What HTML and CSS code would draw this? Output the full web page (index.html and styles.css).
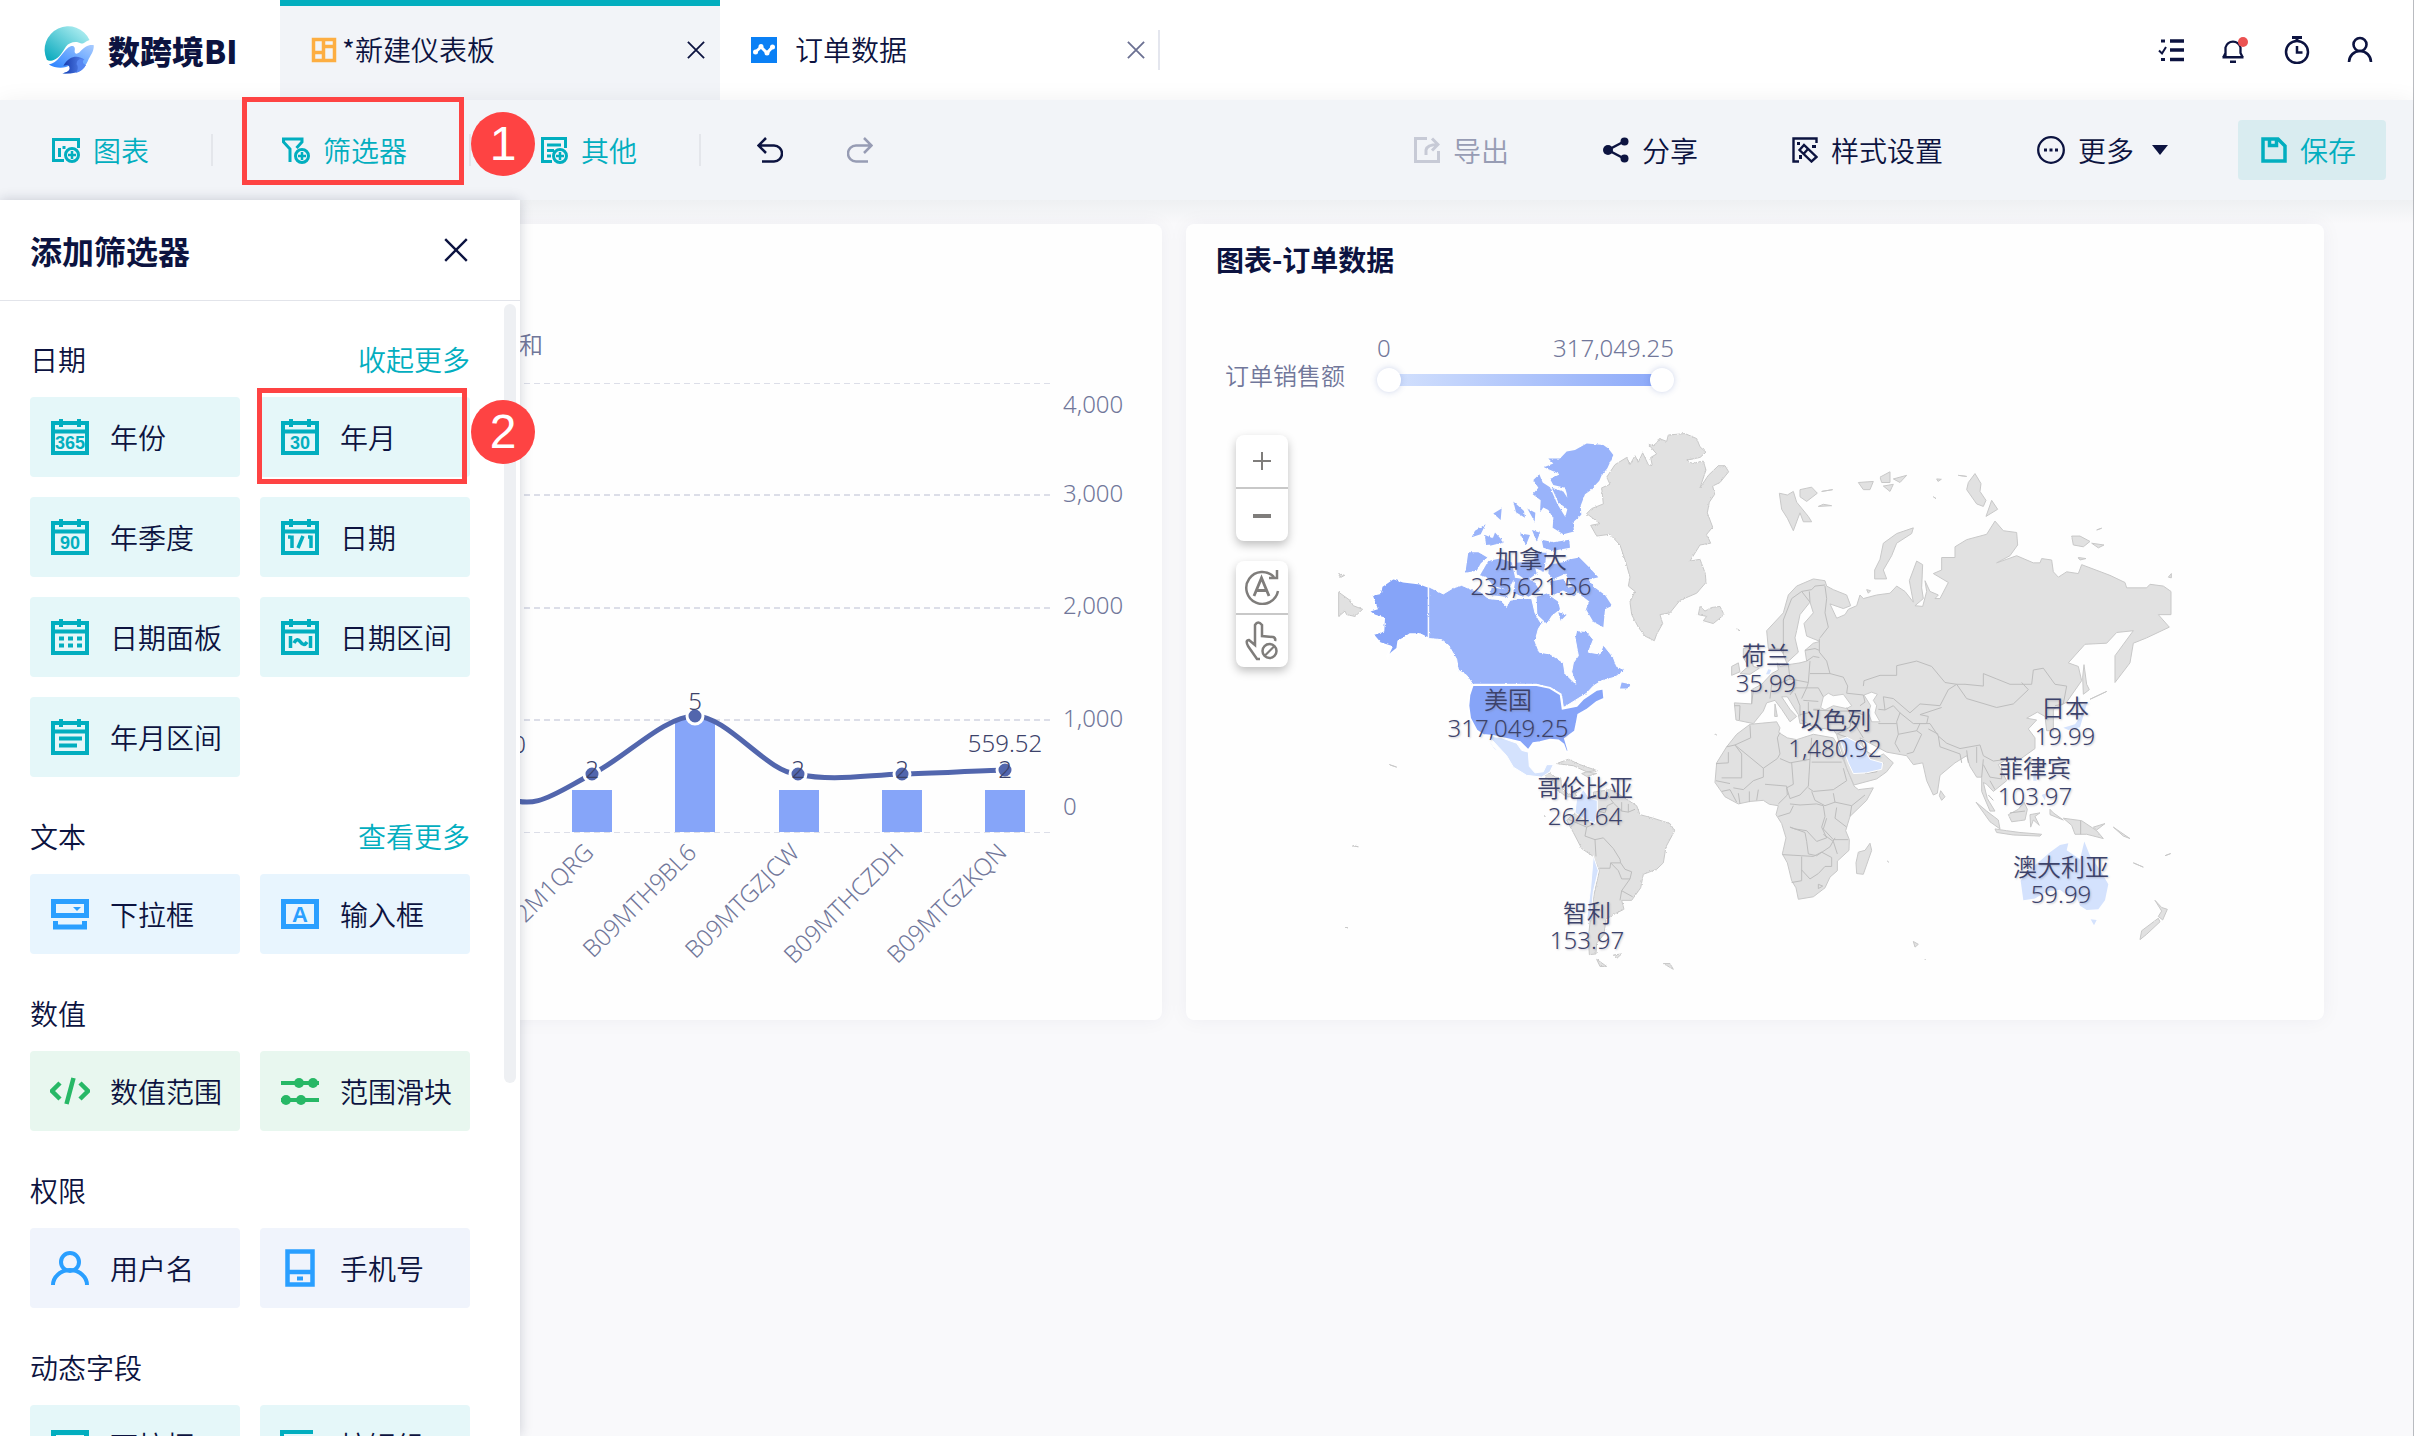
FILE: index.html
```html
<!DOCTYPE html>
<html lang="zh-CN">
<head>
<meta charset="utf-8">
<meta name="viewport" content="width=device-width, initial-scale=1">
<title>数跨境BI</title>
<link rel="stylesheet" href="styles.css">
</head>
<body>
<svg class="defs" aria-hidden="true">
  <symbol id="cal" viewBox="0 0 38 36">
    <path d="M2 4H36V34H2ZM0 12.500H38" fill="none" stroke="currentColor" stroke-width="4"/>
    <path d="M8 0h4v8H8zM26 0h4v8h-4z" fill="currentColor"/>
  </symbol>
  <symbol id="close" viewBox="0 0 20 20">
    <path d="M1 1L19 19M19 1L1 19" fill="none" stroke="currentColor" stroke-width="2"/>
  </symbol>
  <symbol id="plus-dot" viewBox="0 0 16 16">
    <circle cx="8" cy="8" r="6.500" fill="none" stroke="currentColor" stroke-width="3"/>
    <path d="M8 4v8M4 8h8" stroke="currentColor" stroke-width="2.500"/>
  </symbol>
  <symbol id="user" viewBox="0 0 38 34">
    <circle cx="19" cy="11" r="9" fill="none" stroke="currentColor" stroke-width="4"/>
    <path d="M2 34A17 15 0 0 1 36 34" fill="none" stroke="currentColor" stroke-width="4"/>
  </symbol>
</svg>

<div class="app">
  <header class="header">
    <a class="brand" href="#">
      <svg class="brand-mark" viewBox="0 0 150 145" aria-hidden="true">
        <defs>
          <linearGradient id="g1" x1="0" y1="1" x2="1" y2="0"><stop offset="0" stop-color="#00a6bb"/><stop offset="1" stop-color="#c3f6f7"/></linearGradient>
          <linearGradient id="g2" x1="0" y1="1" x2="1" y2="0"><stop offset="0" stop-color="#1878ff"/><stop offset="1" stop-color="#a9ccff"/></linearGradient>
          <linearGradient id="g3" x1="0" y1="0" x2="1" y2="0"><stop offset="0" stop-color="#1236a8"/><stop offset="1" stop-color="#5c8df5"/></linearGradient>
        </defs>
        <path d="M8 102A70 70 0 1 1 137 42C126 45 120 54 112 53C98 44 76 48 66 62C54 80 46 98 25 104Q14 107 8 102Z" fill="url(#g1)"/>
        <path d="M14 116C42 112 52 82 72 66C84 56 96 60 92 76C92 84 98 86 106 80C124 62 132 56 150 58C150 80 140 86 132 106C122 128 104 145 56 143C70 140 84 132 80 118C64 128 36 130 14 116Z" fill="url(#g2)"/>
        <path d="M58 120C78 84 108 90 122 102C112 104 116 116 126 118C112 140 90 146 54 143C76 140 82 128 72 118Z" fill="url(#g3)"/>
        <path d="M98 116C98 104 106 96 120 102C114 104 114 116 126 118C120 130 110 138 96 142C102 132 104 122 98 116Z" fill="#5687f2"/>
      </svg>
      <span>数跨境BI</span>
    </a>
    <nav class="tabs">
      <div class="tab tab-active">
        <svg class="i26" viewBox="0 0 26 26" aria-hidden="true"><path d="M2.500 2.500h21v21h-21zM12.500 2v22M2 15.500h11M12 9.500h12" fill="none" stroke="#fdae42" stroke-width="3.500"/></svg>
        <a class="tab-name" href="#">*新建仪表板</a>
        <button class="tab-close" aria-label="关闭"><svg class="i18"><use href="#close"/></svg></button>
      </div>
      <div class="tab tab-idle">
        <svg class="i26" viewBox="0 0 26 26" aria-hidden="true"><path d="M0 0h26v26H0z" fill="#0a80f5"/><path d="M4.500 15L10 10L16 16L21.500 10" fill="none" stroke="#fff" stroke-width="3" stroke-linejoin="round"/><g fill="#fff"><circle cx="4.500" cy="15" r="2.500"/><circle cx="10" cy="9.500" r="2.500"/><circle cx="16" cy="16" r="2.500"/><circle cx="21.500" cy="10" r="2.500"/></g></svg>
        <a class="tab-name" href="#">订单数据</a>
        <button class="tab-close" aria-label="关闭"><svg class="i18"><use href="#close"/></svg></button>
      </div>
    </nav>
    <div class="header-tools">
      <button aria-label="任务"><svg class="i28" viewBox="0 0 28 28"><path d="M13 5h14M13 14h14M13 23.500h14" stroke="currentColor" stroke-width="3.500"/><path d="M4 3.500h4v3H4zM4 22h4v3H4z" fill="currentColor"/><path d="M2 14.500l3 3L9 11" fill="none" stroke="currentColor" stroke-width="2"/></svg></button>
      <button aria-label="通知"><svg class="i28" viewBox="0 0 28 28"><path d="M5.500 21V11.500A8 9 0 0 1 20.500 11.500V17L22.500 21M3.500 21L5.500 17" fill="none" stroke="currentColor" stroke-width="2.300"/><path d="M2.500 20h21v2.500h-21zM10 24.500h6V27h-6z" fill="currentColor"/><circle cx="23" cy="6" r="5" fill="#eb5252"/></svg></button>
      <button aria-label="计时"><svg class="i28" viewBox="0 0 28 28"><circle cx="14" cy="16" r="11" fill="none" stroke="currentColor" stroke-width="2.500"/><path d="M9 0h10v3H9zM12.500 2h3v4h-3z" fill="currentColor"/><path d="M14 10v6.500h5.500" fill="none" stroke="currentColor" stroke-width="2.500"/></svg></button>
      <button aria-label="用户"><svg class="i28" viewBox="0 0 28 28"><circle cx="14" cy="8.500" r="6.500" fill="none" stroke="currentColor" stroke-width="2.600"/><path d="M3 26A11 11 0 0 1 25 26" fill="none" stroke="currentColor" stroke-width="2.600"/></svg></button>
    </div>
  </header>

  <div class="toolbar">
    <div class="add-group">
      <button class="add">
        <svg class="i28" viewBox="0 0 28 28" aria-hidden="true"><path d="M12 24.500H1.500V3.500H26.500V12M7.500 12v9M12 10v3" fill="none" stroke="currentColor" stroke-width="3"/><use href="#plus-dot" x="12" y="11" width="16" height="16"/></svg>图表
      </button>
      <button class="add">
        <svg class="i28" viewBox="0 0 28 28" aria-hidden="true"><path d="M8 26V13L1.500 6V3H20V6L14.500 12" fill="none" stroke="currentColor" stroke-width="3"/><use href="#plus-dot" x="12" y="12" width="16" height="16"/></svg>筛选器
        <span class="mark mark-tool"></span><span class="step step-tool">1</span>
      </button>
      <button class="add">
        <svg class="i28" viewBox="0 0 28 28" aria-hidden="true"><path d="M12 25.500H2.500V2.500H25.500V12M7 9h14M7 14.500h7M7 20h4" fill="none" stroke="currentColor" stroke-width="3"/><use href="#plus-dot" x="12" y="12" width="16" height="16"/></svg>其他
      </button>
    </div>
    <div class="history">
      <button aria-label="撤销"><svg class="i26" viewBox="0 0 26 26"><path d="M9 1L1.500 8.500L9 16M2 8.500H17A8 8 0 0 1 17 24.500H5" fill="none" stroke="currentColor" stroke-width="2.500"/></svg></button>
      <button class="off" aria-label="重做" disabled><svg class="i26" viewBox="0 0 26 26"><path d="M17 1L24.500 8.500L17 16M24 8.500H9A8 8 0 0 0 9 24.500H21" fill="none" stroke="currentColor" stroke-width="2.500"/></svg></button>
    </div>
    <div class="actions">
      <button class="off" disabled><svg class="i26 pale" viewBox="0 0 26 26" aria-hidden="true"><path d="M13 1.500H1.500V24.500H24.500V14M12 18V13Q13 7.500 24 7.500M18 1.500L24 7.500L18 13.500" fill="none" stroke="currentColor" stroke-width="3"/></svg>导出</button>
      <button><svg class="i26" viewBox="0 0 26 26" aria-hidden="true"><path d="M21 4.500L5 13L21 21.500" fill="none" stroke="currentColor" stroke-width="2.500"/><g fill="currentColor"><circle cx="21.500" cy="4.500" r="4"/><circle cx="5" cy="13" r="5"/><circle cx="21.500" cy="21.500" r="4"/></g></svg>分享</button>
      <button><svg class="i26" viewBox="0 0 26 26" aria-hidden="true"><path d="M7 24.500H1.500V1.500H24.500V6M7.500 13L12 8L24.500 20L19.500 24.500ZM11.500 17L16 12" fill="none" stroke="currentColor" stroke-width="2.400"/><path d="M5 5h3v3H5zM20 8h4v3h-4zM7 18h3v4H7z" fill="currentColor"/></svg>样式设置</button>
      <button class="more"><svg class="i28" viewBox="0 0 28 28" aria-hidden="true"><circle cx="14" cy="14" r="12.800" fill="none" stroke="currentColor" stroke-width="2.300"/><path d="M7 12.500h3v3H7zM12.500 12.500h3v3h-3zM18 12.500h3v3h-3z" fill="currentColor"/></svg>更多<span class="caret"></span></button>
      <button class="save"><svg class="i26" viewBox="0 0 26 26" aria-hidden="true"><path d="M2 2H17L24 9V24H2ZM8.500 2V8.500H15.500V2" fill="none" stroke="currentColor" stroke-width="3.500"/></svg>保存</button>
    </div>
  </div>

  <main class="workspace">
    <div class="board">
      <section class="card" aria-label="订单量图表">
        <svg class="combo" viewBox="0 0 1138 796" role="img" aria-label="柱线图">
          <g class="grid"><path class="thin" d="M480 159.500H1029"/><path d="M480 271H1029M480 384H1029M480 496H1029"/><path class="thin" d="M480 608.500H1029"/></g>
          <g class="axis">
            <text x="495" y="130">和</text>
            <text x="1039" y="189">4,000</text><text x="1039" y="278">3,000</text><text x="1039" y="390">2,000</text><text x="1039" y="503">1,000</text><text x="1039" y="591">0</text>
          </g>
          <g fill="#86a5f9"><path d="M548 566h40v42h-40zM651 496h40v112h-40zM755 566h40v42h-40zM858 566h40v42h-40zM961 566h40v42h-40z"/></g>
          <path d="M480 572C510 588 530 570 568 550C600 535 640 492 671 492C704 492 744 550 774 550C808 558 843 551 878 550C913 549 948 547 981 546" fill="none" stroke="#5266ad" stroke-width="5"/>
          <g class="dots"><circle cx="568" cy="550" r="8"/><circle cx="671" cy="492" r="8"/><circle cx="774" cy="550" r="8"/><circle cx="878" cy="550" r="8"/><circle cx="981" cy="546" r="8"/></g>
          <g class="value">
            <text x="495" y="529">0</text><text x="568" y="554">2</text><text x="671" y="486">5</text><text x="774" y="554">2</text><text x="878" y="554">2</text><text x="981" y="554">2</text><text x="981" y="528">559.52</text>
          </g>
          <g class="axis end">
            <text transform="translate(571 630) rotate(-45)">2M1QRG</text>
            <text transform="translate(674 630) rotate(-45)">B09MTH9BL6</text>
            <text transform="translate(777 630) rotate(-45)">B09MTGZJCW</text>
            <text transform="translate(881 630) rotate(-45)">B09MTHCZDH</text>
            <text transform="translate(984 630) rotate(-45)">B09MTGZKQN</text>
          </g>
        </svg>
      </section>

      <section class="card map-card">
        <h2>图表-订单数据</h2>
        <div class="legend">
          <span class="legend-name">订单销售额</span>
          <div class="legend-scale">
            <div class="legend-ends"><span>0</span><span>317,049.25</span></div>
            <div class="range">
              <input type="range" aria-label="最小值" min="0" max="317049" value="0">
              <input type="range" aria-label="最大值" min="0" max="317049" value="317049">
            </div>
          </div>
        </div>
        <div class="map-body">
          <div class="map-tools">
            <div class="tool-pair">
              <button aria-label="放大"><svg class="i18" viewBox="0 0 18 18"><path d="M9 0v18M0 9h18" stroke="currentColor" stroke-width="2"/></svg></button>
              <button aria-label="缩小"><svg class="i18" viewBox="0 0 18 18"><path d="M0 10h18" stroke="currentColor" stroke-width="4"/></svg></button>
            </div>
            <div class="tool-pair">
              <button aria-label="重置"><svg class="i36" viewBox="0 0 36 36"><path d="M30 8A16 16 0 1 0 34 22M33 1V9H25" fill="none" stroke="currentColor" stroke-width="2.500"/><path d="M10 27L17.500 9L25 27M12.500 21.500H22.500" fill="none" stroke="currentColor" stroke-width="2.800"/></svg></button>
              <button aria-label="禁止拖动"><svg class="i40" viewBox="0 0 36 40"><path d="M16 38H13L4 25Q1 19 5 19L11 24V4Q14 -1 18 4V15L29 16Q32 17 31 20" fill="none" stroke="currentColor" stroke-width="2.500"/><circle cx="25.500" cy="30" r="7" fill="none" stroke="currentColor" stroke-width="2.500"/><path d="M20.500 35L30.500 25" stroke="currentColor" stroke-width="2"/></svg></button>
            </div>
          </div>
          <svg class="map" viewBox="0 0 880 560" role="img" aria-label="世界地图">
            <defs>
              <filter id="coast" x="-2%" y="-2%" width="104%" height="104%"><feTurbulence type="fractalNoise" baseFrequency="0.14" numOctaves="2" seed="4" result="n"/><feDisplacementMap in="SourceGraphic" in2="n" scale="7" xChannelSelector="R" yChannelSelector="G"/></filter>
              <filter id="coast-soft" x="-2%" y="-2%" width="104%" height="104%"><feTurbulence type="fractalNoise" baseFrequency="0.12" numOctaves="2" seed="9" result="n"/><feDisplacementMap in="SourceGraphic" in2="n" scale="4" xChannelSelector="R" yChannelSelector="G"/></filter>
            </defs>
            <!-- Americas -->
            <g transform="scale(.33333 .35714)">
              <g class="land" filter="url(#coast)">
                <path d="M985 68L1000 72 1012 62 1018 52 1040 60 1045 42 1095 38 1130 52 1140 75 1158 90 1140 105 1100 112 1118 122 1150 115 1158 140 1140 190 1165 155 1195 128 1215 128 1226 145 1200 175 1178 185 1184 208 1168 230 1162 260 1178 300 1160 320 1172 345 1140 350 1110 395 1140 390 1156 430 1158 455 1130 485 1080 505 1050 540 1020 545 1028 570 1010 600 1003 618 975 605 955 580 935 545 930 510 945 480 925 465 930 440 918 400 900 350 870 320 830 325 812 295 840 290 800 262 815 248 850 235 845 190 870 180 860 160 885 125 920 105 930 125 945 100 955 118 968 92 985 125 997 128 992 105 1010 95Z"/>
                <path d="M1140 522L1155 535 1175 525 1200 522 1212 545 1180 570 1150 562 1160 550 1135 545Z"/>
                <path d="M56 482L90 505 100 520 128 530 105 550 80 545 75 535 56 550ZM56 430L74 435 60 442Z"/>
                <path d="M672 992L692 988 705 1000 722 1002 725 1030 745 1048 770 1042 765 1055 740 1055 710 1035 700 1010 680 1005Z"/>
                <path d="M710 962L745 950 780 965 832 982 800 985 760 968ZM785 990L800 985 830 990 800 998Z"/>
                <path d="M820 1042L870 1035 900 1050 950 1080 960 1105 1000 1115 1050 1130 1064 1150 1038 1195 1030 1240 1010 1258 970 1272 962 1310 935 1345 905 1345 912 1370 880 1385 858 1398 852 1440 830 1465 828 1495 808 1497 805 1450 812 1390 822 1330 838 1262 820 1222 785 1200 760 1155 740 1120 765 1100 825 1130Z"/>
                <path d="M830 1510L860 1530 840 1530ZM880 1498L905 1495 890 1508ZM1030 1522L1050 1522 1060 1538ZM98 1192L115 1195ZM75 1420L84 1422ZM208 965L230 972ZM672 1108L676 1110ZM1250 585L1260 590ZM1187 880L1190 882Z"/>
              </g>
              <path class="border" d="M832 1095L855 1100 862 1080 880 1072 862 1050M880 1072L905 1095 925 1098 945 1090M905 1070L905 1095M925 1075L925 1098M825 1130L800 1140 795 1165 825 1175 828 1222M825 1175L850 1170 880 1200 900 1230 902 1240 872 1240 870 1255 838 1255M872 1240L895 1262 905 1285 930 1285 935 1265 915 1258 902 1240M930 1285L905 1318 900 1345M905 1318L938 1335M745 1118L775 1130 800 1140"/>
              <g class="us" filter="url(#coast)">
                <path d="M220 443L250 452 300 458 326 467 326 612 300 600 270 600 250 612 235 620 232 640 200 664 215 635 180 625 158 600 190 590 192 555 165 548 145 535 170 528 155 490 180 485 185 465Z"/>
              </g>
              <g class="ca" filter="url(#coast)">
                <path d="M326 467L370 487 400 470 425 463 455 475 480 480 505 500 540 503 560 522 570 505 600 500 635 500 645 540 660 565 672 560 655 585 645 620 658 650 690 655 730 680 735 710 768 740 755 705 760 680 775 660 765 610 770 590 800 592 820 615 805 650 840 655 850 630 880 665 890 690 915 700 885 720 845 730 820 745 800 765 740 800 730 805 725 775 700 755 650 740 458 740 440 715 415 700 410 670 385 630 365 615 326 612Z"/>
              </g>
              <g class="ca isles" filter="url(#coast)">
                <path d="M880 98L862 135 845 155 838 170 810 198 795 208 782 240 784 265 755 290 732 285 742 250 715 230 695 190 730 200 742 218 740 205 735 190 700 182 690 165 720 152 672 132 700 122 685 108 720 108 740 88 765 84 800 66 850 70 865 80Z"/>
                <path d="M658 152L668 175 690 188 712 235 735 270 760 290 762 312 730 320 698 302 700 275 685 252 670 245 660 258 662 225 638 208 655 190 640 168Z"/>
                <path d="M445 370L475 370 502 385 482 402 470 422 436 428ZM505 395L540 388 575 398 585 440 565 475 520 465 500 440 480 435ZM515 470L570 475 560 495 510 490ZM585 455L625 465 610 495 580 485ZM665 335L700 342 748 335 750 358 700 366 670 358ZM525 315L552 342 510 352ZM465 310L497 292 482 320 455 328ZM520 262L545 248 542 280ZM580 228L612 255 615 274 588 258ZM622 248L646 260 644 285ZM600 318L630 322 618 350ZM495 322L520 332 548 345 498 350ZM636 308L660 316 650 340ZM590 400L640 395 650 430 620 450 590 430ZM645 372L680 372 672 425 640 412ZM688 405L742 396 738 430 700 445 685 430Z"/>
                <path d="M740 392L778 385 805 410 835 440 805 447 825 470 855 490 876 520 855 530 850 580 820 565 798 530 808 508 785 492 758 468 736 430ZM650 495L680 486 714 508 720 530 695 548 680 570 652 545ZM715 538L740 545 722 562ZM725 475L762 465 765 495ZM905 735L932 740 925 752 900 752Z"/>
                <path d="M575 440L640 450 660 478 625 495 600 478ZM690 452L730 445 745 470 700 490Z"/>
              </g>
              <path class="us" d="M458 742H650L690 750 722 768 728 808 770 800 790 780 830 755 850 752 853 780 830 790 800 812 775 825 770 850 765 872 735 892 747 930 738 928 730 908 715 897 690 895 660 902 640 905 625 925 600 902 570 895 520 885 490 882 470 870 450 835 445 800 448 770Z"/>
              <path class="lo" d="M505 885L545 890 590 905 605 925 625 930 628 970 645 988 670 985 680 965 700 965 690 985 665 1000 620 995 580 972 560 940 535 915ZM770 1060L790 1035 810 1060 832 1065 832 1095 825 1130 790 1115 765 1100ZM820 1220L835 1262 820 1320 812 1400 800 1400 812 1310ZM495 885L530 925 525 925Z"/>
            </g>
            <!-- Europe, Asia, Africa and Oceania -->
            <g transform="translate(380) scale(.33333 .35714)">
              <g class="land" filter="url(#coast-soft)">
                <path d="M150 852L230 845 240 862 236 875 262 890 290 895 340 880 400 890 410 905 425 940 445 985 462 1025 475 1035 520 1030 500 1065 450 1110 437 1150 448 1175 447 1205 412 1235 412 1262 390 1280 375 1310 340 1335 295 1342 288 1310 275 1290 262 1240 247 1215 258 1170 245 1130 228 1105 235 1080 208 1076 190 1065 150 1068 115 1075 75 1055 45 1015 50 960 80 915 110 880Z"/>
                <path d="M510 1185L515 1205 490 1272 470 1270 468 1240 475 1210 495 1205ZM722 1038L735 1055 725 1065 718 1052Z"/>
                <path d="M103 792L155 795 155 755 185 740 215 710 235 700 232 680 240 690 265 685 300 680 320 675 315 645 340 625 360 620 320 605 312 570 340 540 330 510 300 545 290 590 285 610 295 650 260 680 250 655 240 640 205 640 200 590 250 540 265 490 290 465 340 445 375 450 380 465 400 475 440 490 452 520 430 528 390 515 410 555 435 545 445 530 470 520 480 490 490 500 530 490 570 485 590 465 615 480 640 510 628 450 650 395 668 405 665 470 670 500 645 520 668 522 680 480 675 450 690 480 715 490 705 500 720 500 745 455 700 430 725 420 725 385 765 385 765 355 800 335 860 320 885 283 910 310 950 315 953 350 930 380 890 400 950 380 1000 400 1020 400 1025 388 1055 392 1060 425 1075 440 1100 425 1135 430 1145 405 1230 435 1275 455 1280 470 1340 470 1350 460 1390 465 1413 480 1413 545 1375 545 1408 580 1340 610 1300 625 1290 680 1245 735 1245 660 1300 590 1250 595 1220 625 1155 628 1105 680 1135 690 1145 730 1100 790 1060 810 1060 870 1040 870 1035 830 1012 818 980 835 1010 840 985 865 1005 890 1005 920 960 950 920 950 895 965 920 1010 880 1040 860 1020 850 1015 862 1060 885 1095 870 1095 845 1040 845 1000 830 1000 810 970 800 940 765 960 720 995 712 1045 700 1050 680 1010 668 960 640 965 620 940 560 930 540 920 480 890 495 925 530 945 550 935 580 960 560 985 530 1005 462 1022 440 975 410 880 400 868 340 860 305 840 315 850 300 850 295 825 262 775 245 775 270 810 290 830 270 845 245 810 225 785 200 792 190 815 160 850 108 840Z"/>
                <path d="M130 640L145 635 160 690 178 695 150 712 120 710 145 690 130 665ZM95 690L115 680 120 705 95 715Z"/>
                <path d="M524 445L524 420 540 390 550 345 590 318 640 302 635 318 590 345 575 380 550 420 560 445ZM238 205L262 210 280 200 290 230 325 270 335 285 310 285 300 260 280 310 262 275 245 250ZM300 195L335 188 352 205 320 228 300 215ZM475 175L520 172 510 195 490 195ZM540 160L570 145 570 175 545 175ZM550 185L580 180 570 200ZM580 165L620 155 600 175Z"/>
                <path d="M825 150L843 178 840 200 858 225 850 242 830 235 800 195 805 175ZM875 225L893 250 858 270ZM1115 325L1140 325 1170 340 1150 355 1120 350ZM1175 345L1212 350 1195 358ZM1135 385L1158 388 1140 392ZM775 155L800 158ZM700 215L708 220ZM710 165L724 166 714 172ZM1190 308L1205 303ZM355 242L395 240 370 236ZM365 200L398 195ZM1405 440L1414 430V442ZM500 475L512 478 505 485Z"/>
                <path d="M1152 685L1160 740 1168 755 1150 768 1148 720ZM1170 782L1220 760ZM828 1070L860 1095 895 1120 900 1145 870 1125ZM885 1145L920 1150 960 1155 1025 1160 1020 1165 940 1162 890 1155ZM925 1105L955 1090 972 1070 982 1090 975 1120 935 1125ZM990 1105L1020 1100 1005 1110 1018 1135 1000 1120 992 1140ZM1050 1090L1060 1100 1090 1120 1050 1105ZM1090 1115L1145 1122 1190 1150 1210 1172 1160 1160 1125 1160 1115 1135ZM1180 1140L1215 1130 1190 1148ZM1240 1140L1290 1172 1270 1165ZM1300 1240L1330 1252ZM1395 1220L1412 1214ZM988 945L995 950 990 965ZM225 795L232 830 224 830Z"/>
                <path d="M1365 1345L1385 1365 1402 1370 1388 1400 1375 1390 1385 1375ZM1375 1395L1380 1405 1340 1440 1320 1455 1325 1430ZM640 1460L655 1468 645 1476ZM562 1235L566 1238ZM675 1510L677 1512ZM45 880L47 882Z"/>
              </g>
              <path class="sea" d="M362 805L370 775 385 765 400 772 430 768 455 800 440 808 400 800 375 812ZM492 770L515 762 532 768 520 785 530 800 525 820 540 845 515 845 505 820 512 800Z"/>
              <path class="border" d="M155 795L160 755M103 800L120 800 118 840M250 655L250 560 275 500 305 480 330 510M305 480L335 475 345 465 375 462M375 465L380 500 375 540 385 580 360 610M328 480L330 510M358 612L358 650 380 675 390 710 430 720 443 745 440 765M320 675L340 662 358 665M315 645L345 640 358 645M265 685L270 725 245 735 215 740 210 780M270 725L325 735 330 675M325 735L320 750 285 750 270 770M330 710L390 710M320 750L355 750 370 775M305 780L320 750M310 785L355 788M325 790L325 820 300 825M285 765L300 800 300 830M340 810L360 810M440 765L490 770M490 745L492 730 540 715 590 715 590 688 650 675 695 690 735 735 770 740 795 740 850 745 850 710 890 725 930 740 995 740 1000 700 1030 695 1065 740 1100 745 1090 795 1065 800M770 740L745 755 720 800 660 795 630 820 580 780 550 775 555 812 535 810M770 740L800 780 890 805 940 795 985 755 965 735M555 812L580 800 600 820 640 850 680 850 685 830 660 825 725 805M600 820L590 845 595 880 650 870 660 850 690 850 715 885 740 905 780 920 840 910 850 940 880 955 920 950M535 850L590 850M595 880L585 905 600 930M650 870L665 880 640 930 620 935M685 865L715 880M715 885L720 915 780 935 785 960M800 925L805 960M830 915L830 960M850 950L845 1000M850 965L870 1000 905 1005 905 970M870 1010L885 1035M865 1050L880 1065M340 812L405 815 450 815 490 825M440 805L455 830 450 860 410 880M450 830L490 890M490 770L495 790 480 800M120 1075L115 1045M148 1070L148 1040M170 1065L175 1035"/>
              <path class="border" d="M150 855L152 890 105 910 80 915M105 910L190 975 232 948 240 935 232 890 240 875M105 910L125 935 125 1002 65 1002M48 962L85 960 85 930M190 975L190 1000 160 1010 130 1035 100 1030M240 948L270 960 330 950 335 890M335 958H425M330 950L325 1025 300 1050 270 1060 260 1030 280 1020 275 960M195 1020L260 1025 262 1050 235 1075M325 1030L340 1040 400 1035 440 1010 430 975M335 1040L345 1065 375 1080 405 1070 400 1045M270 1075L300 1078 350 1075 370 1080 375 1110 365 1140 380 1170 350 1180 320 1150 285 1145 270 1140M235 1110L270 1100 280 1080M405 1070L455 1080 495 1050M455 1080L450 1110M410 1085L405 1115 440 1140M380 1115L370 1145 400 1175 445 1175M320 1180L325 1215 350 1220 390 1195 405 1170M247 1217L305 1220 340 1222M305 1222L305 1290 275 1295M305 1260L330 1285 355 1270 375 1250 395 1250M340 1222L365 1210 395 1225 395 1250M370 1160L400 1180 412 1215M65 1040L90 1035 110 1070M48 1010L90 1018M270 1140L315 1155 320 1180M355 1300L368 1305 355 1312ZM1142 1122V1160M930 1100L975 1095M495 990L530 985 550 960M415 880L440 888"/>
              <path class="lo" d="M420 895L440 888 475 905 495 925 510 950 548 960 545 978 500 988 460 990 445 960Z"/>
              <g class="lo isles" filter="url(#coast-soft)">
                <path d="M962 1290L975 1270 1020 1235 1050 1210 1080 1190 1105 1185 1100 1205 1140 1230 1153 1180 1170 1220 1200 1260 1225 1300 1215 1345 1195 1370 1160 1372 1140 1360 1130 1335 1100 1330 1080 1315 1040 1320 1005 1340 970 1345ZM1172 1398L1190 1400 1182 1415Z"/>
                <path d="M1142 830L1146 800 1162 790 1140 860 1105 868 1090 862 1125 852ZM1000 990L1008 985 1010 1010 1000 1010ZM1025 1050L1038 1045 1035 1065ZM198 712L205 698 214 700 208 712Z"/>
              </g>
            </g>
            <g class="place">
              <text x="211" y="148">加拿大<tspan x="211" y="175">235,621.56</tspan></text>
              <text x="188" y="289">美国<tspan x="188" y="317">317,049.25</tspan></text>
              <text x="265" y="377">哥伦比亚<tspan x="265" y="405">264.64</tspan></text>
              <text x="267" y="502">智利<tspan x="267" y="529">153.97</tspan></text>
              <text x="446" y="244">荷兰<tspan x="446" y="272">35.99</tspan></text>
              <text x="515" y="309">以色列<tspan x="515" y="337">1,480.92</tspan></text>
              <text x="745" y="297">日本<tspan x="745" y="325">19.99</tspan></text>
              <text x="715" y="357">菲律宾<tspan x="715" y="385">103.97</tspan></text>
              <text x="741" y="456">澳大利亚<tspan x="741" y="483">59.99</tspan></text>
            </g>
          </svg>
        </div>
      </section>
    </div>

    <aside class="panel">
      <div class="panel-head">
        <h1>添加筛选器</h1>
        <button aria-label="关闭"><svg class="i24"><use href="#close"/></svg></button>
      </div>
      <div class="panel-body">
        <section class="teal">
          <div class="group-head"><h3>日期</h3><a href="#">收起更多</a></div>
          <div class="tiles">
            <button class="tile"><svg class="icon" viewBox="0 0 40 40" aria-hidden="true"><use href="#cal" x="1" y="2" width="38" height="36"/><text x="20" y="32">365</text></svg>年份</button>
            <button class="tile"><svg class="icon" viewBox="0 0 40 40" aria-hidden="true"><use href="#cal" x="1" y="2" width="38" height="36"/><text x="20" y="32">30</text></svg>年月<span class="mark mark-tile"></span><span class="step step-tile">2</span></button>
            <button class="tile"><svg class="icon" viewBox="0 0 40 40" aria-hidden="true"><use href="#cal" x="1" y="2" width="38" height="36"/><text x="20" y="32">90</text></svg>年季度</button>
            <button class="tile"><svg class="icon" viewBox="0 0 40 40" aria-hidden="true"><use href="#cal" x="1" y="2" width="38" height="36"/><path d="M8 20h2.500M12 18.500V31M18 31L23 19M28 20h2.500M31 18.500V31" fill="none" stroke="currentColor" stroke-width="3.500"/></svg>日期</button>
            <button class="tile"><svg class="icon" viewBox="0 0 40 40" aria-hidden="true"><use href="#cal" x="1" y="2" width="38" height="36"/><path d="M9 21.500h24M9 28.500h24" fill="none" stroke="currentColor" stroke-width="4" stroke-dasharray="5 4"/></svg>日期面板</button>
            <button class="tile"><svg class="icon" viewBox="0 0 40 40" aria-hidden="true"><use href="#cal" x="1" y="2" width="38" height="36"/><path d="M10.500 19v12M30.500 19v12M14 26Q17 20 20.500 25T27 25" fill="none" stroke="currentColor" stroke-width="3.500"/></svg>日期区间</button>
            <button class="tile"><svg class="icon" viewBox="0 0 40 40" aria-hidden="true"><use href="#cal" x="1" y="2" width="38" height="36"/><path d="M9 21.500h23M9 28.500h18" fill="none" stroke="currentColor" stroke-width="4"/></svg>年月区间</button>
          </div>
        </section>
        <section class="blue">
          <div class="group-head"><h3>文本</h3><a href="#">查看更多</a></div>
          <div class="tiles">
            <button class="tile"><svg class="icon" viewBox="0 0 40 40" aria-hidden="true"><path d="M3.500 7.500h33v14h-33zM5.500 27v6h29v-6" fill="none" stroke="currentColor" stroke-width="5"/><path d="M23 13h8l-4 4z" fill="currentColor"/></svg>下拉框</button>
            <button class="tile"><svg class="icon" viewBox="0 0 40 40" aria-hidden="true"><path d="M3.500 7.500h33v25h-33z" fill="none" stroke="currentColor" stroke-width="5"/><text class="letter" x="20" y="28">A</text></svg>输入框</button>
          </div>
        </section>
        <section class="green">
          <div class="group-head"><h3>数值</h3></div>
          <div class="tiles">
            <button class="tile"><svg class="icon" viewBox="0 0 40 40" aria-hidden="true"><path d="M10 12L2 20L10 28M30 12L38 20L30 28M23.500 7L16.500 33" fill="none" stroke="currentColor" stroke-width="4.500"/></svg>数值范围</button>
            <button class="tile"><svg class="icon" viewBox="0 0 40 40" aria-hidden="true"><path d="M1 12h38M1 29h38" stroke="currentColor" stroke-width="4"/><g fill="currentColor"><circle cx="19" cy="12" r="5"/><circle cx="33" cy="12" r="5"/><circle cx="6" cy="29" r="5"/><circle cx="21" cy="29" r="5"/></g></svg>范围滑块</button>
          </div>
        </section>
        <section class="pale-blue">
          <div class="group-head"><h3>权限</h3></div>
          <div class="tiles">
            <button class="tile"><svg class="icon" viewBox="0 0 40 40" aria-hidden="true"><use href="#user" x="1" y="1" width="38" height="38"/></svg>用户名</button>
            <button class="tile"><svg class="icon" viewBox="0 0 40 40" aria-hidden="true"><path d="M7.500 3.500h25v33h-25zM7 24h26" fill="none" stroke="currentColor" stroke-width="4.500"/><path d="M17 28.500h6v4h-6z" fill="currentColor"/></svg>手机号</button>
          </div>
        </section>
        <section class="teal">
          <div class="group-head"><h3>动态字段</h3></div>
          <div class="tiles">
            <button class="tile"><svg class="icon" viewBox="0 0 40 40" aria-hidden="true"><path d="M3.500 7.500h33v14h-33zM5.500 27v6h29v-6" fill="none" stroke="currentColor" stroke-width="5"/></svg>下拉框</button>
            <button class="tile"><svg class="icon" viewBox="0 0 40 40" aria-hidden="true"><path d="M33 7H2V32H33M8 14h18" fill="none" stroke="currentColor" stroke-width="4"/></svg>按钮组</button>
          </div>
        </section>
      </div>
      <div class="scrollbar"></div>
    </aside>
  </main>
</div>
</body>
</html>
```

FILE: styles.css
```css
:root {
  --navy: #0c1340;
  --teal: #02aebf;
  --bar: #f2f4f8;
  --gray: #71779a;
  --red: #fe4343;
}

* { box-sizing: border-box; }

body {
  margin: 0;
  color: var(--navy);
  font: 350 28px/38px "Noto Sans CJK SC", "Noto Sans", sans-serif;
}

button {
  display: flex;
  align-items: center;
  margin: 0;
  padding: 0;
  border: 0;
  background: none;
  color: inherit;
  font: inherit;
  white-space: nowrap;
}

a { color: inherit; text-decoration: none; }
h1, h2, h3 { margin: 0; }
svg { display: block; flex: none; }

.defs { position: absolute; width: 0; height: 0; }
.i18 { width: 18px; height: 18px; }
.i24 { width: 24px; height: 24px; }
.i26 { width: 26px; height: 26px; }
.i28 { width: 28px; height: 28px; }
.i36 { width: 36px; height: 36px; }
.i40 { width: 36px; height: 40px; }

.app {
  display: flex;
  flex-direction: column;
  height: 100vh;
  border-right: 1px solid #b9bbc0;
}

/* Header */
.header {
  display: flex;
  flex: none;
  height: 100px;
  background: #fff;
}
.brand {
  display: flex;
  align-items: center;
  gap: 14px;
  width: 280px;
  padding-left: 44px;
  font-size: 32px;
  font-weight: 900;
}
.brand-mark { width: 50px; height: 48px; }
.tabs { display: flex; }
.tab {
  display: flex;
  align-items: center;
  width: 440px;
  padding: 0 15px 0 31px;
}
.tab-active {
  gap: 5px;
  background: linear-gradient(var(--teal) 6px, var(--bar) 6px);
}
.tab-idle {
  gap: 18px;
  background: linear-gradient(#e4e6ee, #e4e6ee) right / 2px 40px no-repeat;
}
.tab-name { padding-bottom: 2px; }
.tab-close { margin-left: auto; }
.tab-idle .tab-close { color: #6b7092; }
.header-tools {
  display: flex;
  align-items: center;
  gap: 35px;
  margin-left: auto;
  padding-right: 39px;
}

/* Toolbar */
.toolbar {
  position: relative;
  z-index: 1;
  display: flex;
  flex: none;
  align-items: center;
  height: 100px;
  padding-right: 27px;
  background: var(--bar);
  box-shadow: 0 4px 24px rgba(20, 30, 40, .08);
}
.add-group { display: flex; color: var(--teal); }
.add {
  position: relative;
  gap: 13px;
  padding: 0 62px 0 71px;
}
.add:first-child { padding-left: 52px; }
.add::after {
  content: "";
  width: 2px;
  height: 32px;
  margin-left: 49px;
  margin-right: -64px;
  background: #e4e6eb;
}
.history { display: flex; gap: 64px; padding-left: 58px; }
.off { color: #979cb4; }
.pale { color: #c7cad6; }
.actions {
  display: flex;
  align-items: center;
  gap: 94px;
  margin-left: auto;
}
.actions button { gap: 13px; }
.caret {
  margin-left: 5px;
  border: 8px solid transparent;
  border-top: 10px solid var(--navy);
  border-bottom: 0;
}
.actions .save {
  height: 60px;
  margin-left: -24px;
  padding: 0 30px 0 23px;
  border-radius: 4px;
  background: #d9ecf0;
  color: var(--teal);
}

/* Dashboard */
.workspace {
  position: relative;
  z-index: 2;
  flex: 1;
  min-height: 0;
}
.board {
  display: grid;
  grid-template-columns: 1fr 1fr;
  align-items: start;
  gap: 24px;
  height: 100%;
  padding: 24px 89px 24px 24px;
  background: linear-gradient(#eef0f2, #f9f9fb 24px);
}
.card {
  height: 796px;
  border-radius: 8px;
  background: #fefefe;
  box-shadow: 0 0 20px rgba(30, 40, 80, .05);
}
.combo { width: 100%; height: 100%; }
.combo, .map, .legend {
  font-family: "Noto Sans", "Noto Sans CJK SC", sans-serif;
  font-size: 24px;
}
.grid path {
  stroke: #dcdee8;
  stroke-width: 2;
  stroke-dasharray: 6 4;
}
.grid .thin { stroke-width: 1; }
.axis { fill: var(--gray); }
.end { text-anchor: end; }
.dots { fill: #5266ad; stroke: #fff; stroke-width: 3; }
.value, .place { fill: #3c426a; text-anchor: middle; }

.map-card { padding: 16px 0 0 30px; }
.map-card h2 { font-size: 28px; font-weight: 700; }
.legend {
  display: flex;
  align-items: flex-end;
  gap: 32px;
  margin-top: 52px;
  padding-left: 9px;
  color: var(--gray);
}
.legend-name { line-height: 36px; }
.legend-scale { width: 297px; }
.legend-ends {
  display: flex;
  justify-content: space-between;
  line-height: 36px;
}
.range {
  display: grid;
  height: 28px;
  background: linear-gradient(90deg, #d3e1fd, #8ca9f9) center / 272px 12px no-repeat;
}
.range input {
  grid-area: 1 / 1;
  width: 100%;
  margin: 0;
  appearance: none;
  background: none;
  pointer-events: none;
}
.range input::-webkit-slider-thumb {
  width: 24px;
  height: 24px;
  appearance: none;
  border-radius: 50%;
  background: #fff;
  box-shadow: 0 0 6px rgba(60, 90, 180, .25);
  pointer-events: auto;
}
.map-body {
  display: flex;
  align-items: flex-start;
  gap: 32px;
  margin-top: 26px;
  padding: 0 124px 0 20px;
}
.map-tools {
  display: flex;
  flex-direction: column;
  gap: 20px;
  padding-top: 15px;
  color: #7f7d7b;
}
.tool-pair {
  border-radius: 8px;
  background: #fff;
  box-shadow: 0 4px 10px rgba(0, 0, 0, .25);
}
.tool-pair button {
  justify-content: center;
  width: 52px;
  height: 52px;
}
.tool-pair button + button { height: 54px; border-top: 2px solid #c8c8c8; }
.map { flex: 1; min-width: 0; }
.map path { vector-effect: non-scaling-stroke; }
.land { fill: #e1e1e1; stroke: #c8c8c8; stroke-width: 1; }
.border { fill: none; stroke: #bdbdbd; stroke-width: 1; }
.sea { fill: #fefefe; stroke: #cbcbcb; stroke-width: 1; }
.us { fill: #86a4f8; stroke: #fff; stroke-width: 2; }
.ca { fill: #99b3fa; stroke: #fff; stroke-width: 1; }
.lo { fill: #d4e2fd; stroke: #fff; stroke-width: 1; }
.isles { stroke: none; }
.place { text-shadow: 1px 1px 2px rgba(120, 120, 140, .4); }

/* Filter drawer */
.panel {
  position: absolute;
  top: 0;
  bottom: 0;
  left: 0;
  width: 520px;
  background: #fff;
  box-shadow: 0 0 12px rgba(20, 30, 60, .2);
}
.panel-head {
  display: flex;
  align-items: center;
  justify-content: space-between;
  height: 101px;
  padding: 0 52px 0 30px;
  border-bottom: 1px solid #e2e4ea;
}
.panel-head h1 { font-size: 32px; font-weight: 700; }
.panel-body {
  position: absolute;
  inset: 101px 0 0;
  display: flex;
  flex-direction: column;
  gap: 40px;
  padding: 39px 50px 0 30px;
  overflow: hidden;
}
/* leaves room for the step number that hangs over the drawer's edge */
.panel-body:has(.step) { right: -40px; padding-right: 90px; }
.group-head {
  display: flex;
  justify-content: space-between;
  height: 41px;
  margin-bottom: 16px;
}
.group-head h3 { font-size: 28px; font-weight: inherit; }
.group-head a { color: var(--teal); }
.tiles {
  display: grid;
  grid-template-columns: 1fr 1fr;
  gap: 20px;
}
.tile {
  position: relative;
  gap: 20px;
  height: 80px;
  padding-left: 20px;
  border-radius: 4px;
}
.icon { width: 40px; height: 40px; }
.icon text {
  fill: currentColor;
  font: 700 18px "Liberation Sans", sans-serif;
  text-anchor: middle;
}
.icon .letter { font-size: 22px; }
.teal .tile { background: #e5f7f9; }
.teal .icon { color: var(--teal); }
.blue .tile { background: #e8f5fe; }
.blue .icon, .pale-blue .icon { color: #2a9fff; }
.green .tile { background: #e8f7ef; }
.green .icon { color: #27b866; }
.pale-blue .tile { background: #f0f4fc; }
.scrollbar {
  position: absolute;
  top: 104px;
  right: 4px;
  width: 12px;
  height: 63%;
  border-radius: 6px;
  background: #eef0f3;
}

/* Walkthrough marks */
.mark {
  position: absolute;
  z-index: 3;
  border: 5px solid var(--red);
}
.step {
  position: absolute;
  z-index: 3;
  width: 64px;
  height: 64px;
  border-radius: 50%;
  background: var(--red);
  color: #fff;
  font: 400 48px/64px "Liberation Sans", sans-serif;
  text-align: center;
}
.mark-tool { left: 31px; top: -34px; width: 222px; height: 88px; }
.step-tool { left: 260px; top: -19px; }
.mark-tile { left: -3px; top: -9px; width: 210px; height: 96px; }
.step-tile { left: 211px; top: 3px; }
```
